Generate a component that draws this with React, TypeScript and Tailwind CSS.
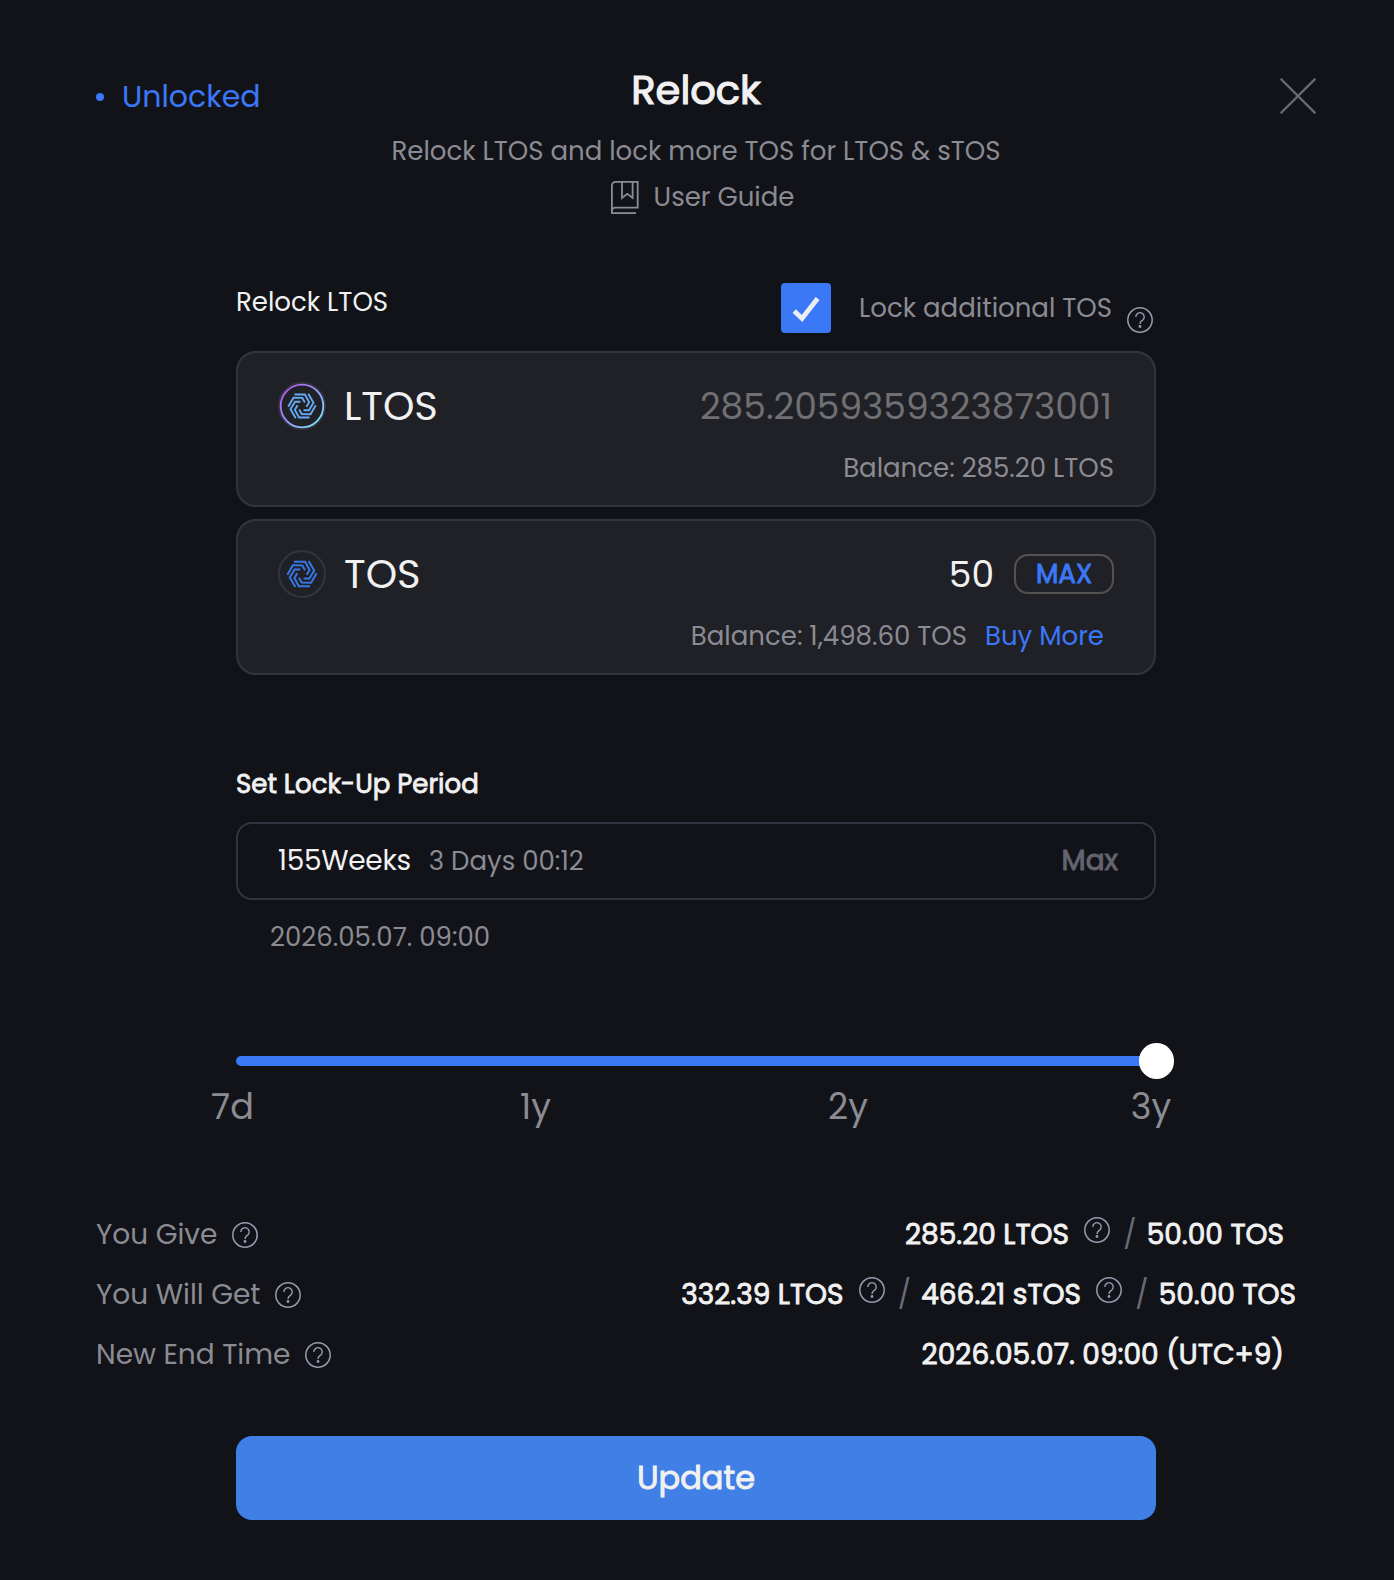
import type { ReactNode } from "react";

function HelpIcon({ className = "" }: { className?: string }) {
  return (
    <svg className={`size-[26px] shrink-0 ${className}`} viewBox="0 0 26 26" fill="none" stroke="#9a9aaf">
      <circle cx="13" cy="13" r="12.2" strokeWidth="1.5" />
      <path d="M8.8 9.9a4.2 4.2 0 1 1 6.8 3.3c-1.5 1.1-2.5 1.7-2.5 3.3v.5" strokeWidth="1.4" />
      <circle cx="13" cy="19.5" r="1.4" fill="#9a9aaf" stroke="none" />
    </svg>
  );
}

const ARMS = [0, 60, 120, 180, 240, 300];

function Swirl({ color, scale }: { color: string; scale: number }) {
  return (
    <g transform={`translate(24 24) scale(${scale})`} fill="none" stroke={color} strokeWidth="2">
      {ARMS.map((angle) => (
        <path key={angle} d="M-8 -12.3H3.1L7.6 -4.1L4.7 .8" transform={`rotate(${angle})`} />
      ))}
    </g>
  );
}

function LtosLogo() {
  return (
    <svg className="size-12 shrink-0" viewBox="0 0 48 48" fill="none">
      <defs>
        <linearGradient id="ring" x1="6" y1="8" x2="42" y2="40" gradientUnits="userSpaceOnUse">
          <stop stopColor="#b35cf2" />
          <stop offset=".5" stopColor="#9a9bff" />
          <stop offset="1" stopColor="#7ce4fb" />
        </linearGradient>
      </defs>
      <circle cx="24" cy="24" r="23" stroke="#343441" strokeWidth="2" />
      <circle cx="24" cy="24" r="21.3" stroke="url(#ring)" strokeWidth="1.8" />
      <Swirl color="#66aaf3" scale={0.94} />
    </svg>
  );
}

function TosLogo() {
  return (
    <svg className="size-12 shrink-0" viewBox="0 0 48 48" fill="none">
      <circle cx="24" cy="24" r="23" stroke="#343441" strokeWidth="2" />
      <Swirl color="#3777e6" scale={1} />
    </svg>
  );
}

function BookIcon() {
  return (
    <svg className="mt-0.5 h-[34px] w-7 shrink-0" viewBox="0 0 28 34" fill="none" stroke="#8b8b93" strokeWidth="1.8">
      <path d="M.9 31.9V4.6A3.7 3.7 0 0 1 4.6 .9H26.7V26.7H4.4A3.4 3.4 0 0 0 .9 30" />
      <path d="M.1 32.1H25" />
      <path d="M11 .9V17L16.3 12.8L21.6 17V.9" />
    </svg>
  );
}

function Card({ children }: { children: ReactNode }) {
  return (
    <div className="h-[156px] rounded-[20px] border-2 border-[#343441] bg-[#202126] pt-[29px] pr-10 pl-10">
      {children}
    </div>
  );
}

function Slash() {
  return <span className="w-[36.7px] pl-[3px] text-center text-[#6a6a74] [-webkit-text-stroke:0px]">/</span>;
}

function InfoRow({ label, children }: { label: string; children: ReactNode }) {
  return (
    <div className="flex h-[60px] items-center justify-between text-[28px]">
      <div className="flex items-center text-[#8b8b93]">
        <span className="mt-px">{label}</span>
        <HelpIcon className="mt-0.5 ml-[14.5px]" />
      </div>
      <div className="mt-px flex items-center text-[#f1f1f1] [-webkit-text-stroke:0.85px]">{children}</div>
    </div>
  );
}

export default function App() {
  return (
    <div className="h-[1580px] w-full overflow-hidden bg-[#121318] font-['Poppins','Inter',sans-serif] font-normal whitespace-nowrap">
      <div className="flex w-[1392px] flex-col">
        <header className="grid h-[283px] grid-cols-[1fr_auto_1fr] pt-[66px]">
          <div className="mt-[7px] ml-24 flex h-12 items-center text-[30px] text-[#3b78f8]">
            <span className="size-2 rounded-full bg-[#3b78f8]" />
            <span className="-mt-0.5 ml-[18px]">Unlocked</span>
          </div>
          <div className="flex flex-col items-center text-[26px] text-[#8b8b93]">
            <h1 className="text-[40px] leading-[48px] text-[#f1f1f1] [-webkit-text-stroke:1.2px]">Relock</h1>
            <p className="mt-[19px] leading-9">Relock LTOS and lock more TOS for LTOS &amp; sTOS</p>
            <div className="mt-[10px] ml-[13px] flex h-9 items-center">
              <BookIcon />
              <span className="ml-[15px]">User Guide</span>
            </div>
          </div>
          <button className="mt-3 mr-[76px] size-9 justify-self-end">
            <svg viewBox="0 0 36 36" className="size-9" stroke="#686873" strokeWidth="2.3">
              <path d="M.8 .8L35.2 35.2M35.2 .8L.8 35.2" />
            </svg>
          </button>
        </header>

        <main className="mx-auto flex w-[920px] flex-col text-[26px] text-[#8b8b93]">
          <div className="flex h-[50px] items-center justify-between">
            <span className="self-start leading-[38px] text-[#f1f1f1]">Relock LTOS</span>
            <div className="mr-[3px] flex h-[50px] items-center">
              <span className="flex size-[50px] items-center justify-center rounded bg-[#3b78f8]">
                <svg viewBox="0 0 50 50" className="size-[50px]" fill="none" stroke="#ecedf2" strokeWidth="4.8">
                  <path d="M13.2 28L21 35.4L36.6 15.4" />
                </svg>
              </span>
              <span className="ml-7">Lock additional TOS</span>
              <HelpIcon className="ml-[15px] self-end" />
            </div>
          </div>

          <div className="mt-[18px] flex flex-col gap-3">
            <Card>
              <div className="flex h-12 items-center">
                <LtosLogo />
                <span className="ml-[18px] text-[40px] text-[#f1f1f1]">LTOS</span>
                <span className="mt-px mr-0.5 ml-auto text-[36px] text-[#707074]">285.2059359323873001</span>
              </div>
              <div className="mt-5 flex h-9 items-center justify-end">Balance: 285.20 LTOS</div>
            </Card>
            <Card>
              <div className="flex h-12 items-center text-[#f1f1f1]">
                <TosLogo />
                <span className="ml-[18px] text-[40px]">TOS</span>
                <span className="mt-px ml-auto text-[36px]">50</span>
                <button className="ml-5 flex h-10 w-[100px] items-center justify-center rounded-[14px] border-2 border-[#535353] text-[#3b78f8] [-webkit-text-stroke:0.9px]">
                  MAX
                </button>
              </div>
              <div className="mt-5 flex h-9 items-center justify-end">
                <span>Balance: 1,498.60 TOS</span>
                <span className="mr-2.5 ml-[18px] text-[#3b78f8]">Buy More</span>
              </div>
            </Card>
          </div>

          <h2 className="mt-[91px] leading-9 text-[#f1f1f1] [-webkit-text-stroke:0.8px]">Set Lock-Up Period</h2>
          <div className="mt-5 flex h-[78px] items-center rounded-2xl border-2 border-[#343441] pr-9 pl-10">
            <span className="text-[28px] tracking-[-0.3px] text-[#f1f1f1]">155Weeks</span>
            <span className="ml-[18px]">3 Days 00:12</span>
            <span className="ml-auto text-[28px] text-[#64646f] [-webkit-text-stroke:0.9px]">Max</span>
          </div>
          <span className="mt-[19px] ml-[34px] leading-9">2026.05.07. 09:00</span>

          <div className="relative mt-[88px] flex h-9 items-center">
            <div className="h-2.5 w-full rounded-full bg-[#3b78f8]" />
            <span className="absolute top-0 -right-[18px] size-[35.5px] rounded-full bg-white" />
          </div>
          <div className="mt-[5px] -mr-[50px] -ml-[33.5px] flex text-center text-[35px] leading-[45px]">
            <span className="w-[60px]">7d</span>
            <span className="ml-[243px] w-[60px]">1y</span>
            <span className="ml-[252.5px] w-[60px]">2y</span>
            <span className="ml-[243px] w-[60px]">3y</span>
          </div>
        </main>

        <section className="mt-[75px] mr-24 ml-24">
          <InfoRow label="You Give">
            <span>285.20 LTOS</span>
            <HelpIcon className="mb-[9px] ml-[15px]" />
            <Slash />
            <span className="mr-3">50.00 TOS</span>
          </InfoRow>
          <InfoRow label="You Will Get">
            <span>332.39 LTOS</span>
            <HelpIcon className="mb-[9px] ml-[15px]" />
            <Slash />
            <span>466.21 sTOS</span>
            <HelpIcon className="mb-[9px] ml-[15px]" />
            <Slash />
            <span>50.00 TOS</span>
          </InfoRow>
          <InfoRow label="New End Time">
            <span className="mr-3">2026.05.07. 09:00 (UTC+9)</span>
          </InfoRow>
        </section>

        <button className="mx-auto mt-[52px] h-[84px] w-[920px] rounded-2xl bg-[#3f7fe6] pb-px text-[32px] text-[#f1f1f1] [-webkit-text-stroke:0.9px]">
          Update
        </button>
      </div>
    </div>
  );
}
